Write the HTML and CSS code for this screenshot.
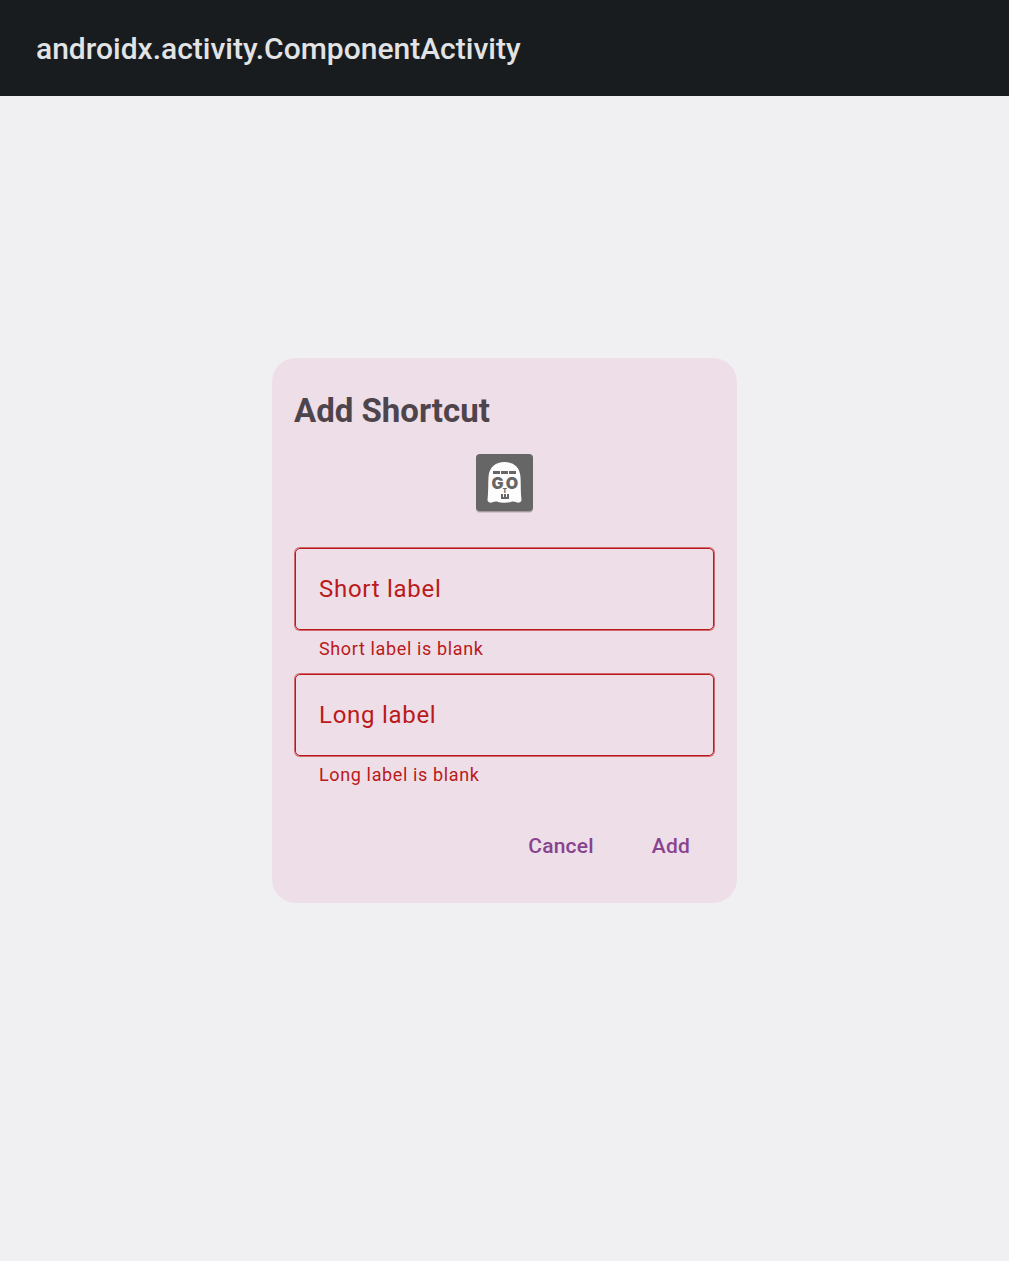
FILE: index.html
```
<!DOCTYPE html>
<html lang="en">
<head>
<meta charset="utf-8">
<meta name="viewport" content="width=device-width, initial-scale=1">
<title>Add Shortcut</title>
<link rel="stylesheet" href="styles.css">
</head>
<body>
<header class="app-bar"><h1 class="app-title">androidx.activity.ComponentActivity</h1></header>
<main class="stage">
<form class="dialog" aria-labelledby="dialog-title">
<h2 class="dialog-title" id="dialog-title">Add Shortcut</h2>
<svg class="shortcut-icon" viewBox="0 0 58 60" role="img" aria-label="Ghost">
<rect x="0" y="2" width="57" height="57" rx="4" fill="#000" opacity=".12"/>
<rect x="0" y="2" width="57" height="56" rx="4" fill="#000" opacity=".22"/>
<rect x="0" y="0" width="57" height="57" rx="4" fill="#666"/>
<path d="M11.500 46C12.500 38 12 30 12.500 23C13 13 20 8 28.500 8S44 13 44.500 23C45 30 44.500 38 45.500 46C45.500 48 43 49 41 48.500C39 48 37 47 35 48C32 49 25 49 22 48C20 47 18 48 16 48.500C14 49 11.500 48 11.500 46Z" fill="#fdfdfd"/>
<path d="M17 17H24V20H17ZM25 17H32V20H25ZM33 17H40V20H33Z" fill="#666"/>
<g class="icon-letters" text-anchor="middle">
<text x="21.500" y="34.500" font-size="16">G</text>
<text x="36" y="34.500" font-size="16">O</text>
<text x="28.700" y="39" font-size="6">T</text>
</g>
<path d="M25 40V45H33V40H31V43H30V40H28V43H27V40Z" fill="#666"/>
</svg>
<div class="field">
<label class="field-label" for="short">Short label</label>
<input class="field-input" id="short" type="text" aria-invalid="true" aria-describedby="short-error">
<p class="field-error" id="short-error">Short label is blank</p>
</div>
<div class="field">
<label class="field-label" for="long">Long label</label>
<input class="field-input" id="long" type="text" aria-invalid="true" aria-describedby="long-error">
<p class="field-error" id="long-error">Long label is blank</p>
</div>
<div class="actions">
<button class="action" type="button">Cancel</button>
<button class="action" type="button">Add</button>
</div>
</form>
</main>
</body>
</html>
```
FILE: styles.css
```
* { box-sizing: border-box; }
body { margin: 0; min-height: 100vh; display: flex; flex-direction: column; background: #f0f0f2; font-family: Roboto, sans-serif; }
.app-bar { display: flex; align-items: center; min-height: 96px; padding: 2px 36px 0; background: #191c1e; }
.app-title { margin: 0; color: #e1e3e5; font-size: 30px; line-height: 36px; font-weight: 500; }
/* The dialog is centred on the whole window, so the bar's height is balanced below. */
.stage { flex: 1; display: flex; align-items: center; justify-content: center; padding: 24px 24px 120px; }
.dialog { display: flex; flex-direction: column; width: 100%; max-width: 465px; padding: 32px 22px 27px; border-radius: 24px; background: #eedee8; }
.dialog-title { margin: 0; color: #4e444b; font-size: 33px; line-height: 42px; font-weight: 700; }
.shortcut-icon { align-self: center; width: 58px; height: 60px; margin: 22px 0 33px; }
.icon-letters { fill: #666; font-family: Inter, sans-serif; font-weight: 900; }
/* The resting label shares a grid cell with its text box. */
.field { display: grid; grid-template-rows: 84px auto; color: #ba1a1a; }
.field-label, .field-input { grid-area: 1 / 1; }
.field-label { align-self: center; padding: 0 25px; font-size: 24px; line-height: 36px; letter-spacing: 0.03em; pointer-events: none; }
.field-input { margin: 1px; padding: 0 23px; border: 1px solid #ba1a1a; border-radius: 5px; outline: 0; box-shadow: 0 0 0 1px rgba(186, 26, 26, 0.6); background: transparent; color: inherit; font-family: inherit; font-size: 24px; }
.field-error { margin: 0; padding: 6px 25px 12px; font-size: 18px; line-height: 24px; letter-spacing: 0.035em; }
.actions { display: flex; justify-content: flex-end; gap: 22px; margin-top: 17px; padding-right: 7px; }
.action { height: 60px; padding: 0 18px; border: 0; border-radius: 30px; background: transparent; color: #88438f; font-family: inherit; font-size: 21px; font-weight: 500; letter-spacing: 0.01em; }
```
